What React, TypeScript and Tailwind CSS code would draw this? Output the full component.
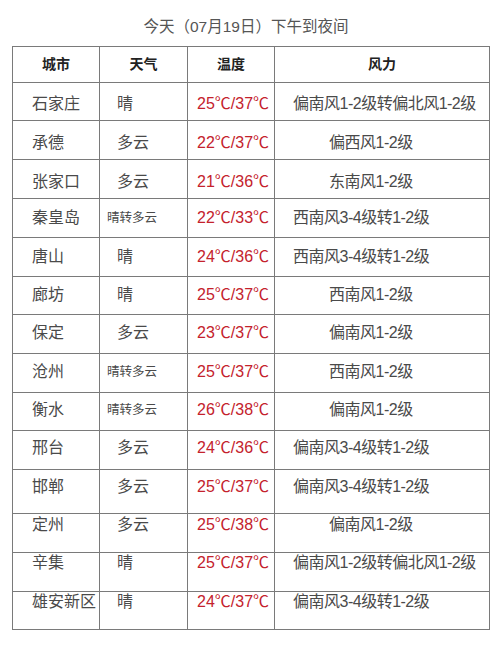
import React from 'react';

type Row = {
  city: string;
  weather: string;
  temp: string;
  wind: string;
  h: string;
  pt: string;
};

// h = row height incl. bottom border, pt = text offset from the row top
const rows: Row[] = [
  { city: '石家庄', weather: '晴', temp: '25℃/37℃', wind: '偏南风1-2级转偏北风1-2级', h: 'h-[38px]', pt: 'pt-[11px]' },
  { city: '承德', weather: '多云', temp: '22℃/37℃', wind: '偏西风1-2级', h: 'h-[39px]', pt: 'pt-[12px]' },
  { city: '张家口', weather: '多云', temp: '21℃/36℃', wind: '东南风1-2级', h: 'h-[39px]', pt: 'pt-[12px]' },
  { city: '秦皇岛', weather: '晴转多云', temp: '22℃/33℃', wind: '西南风3-4级转1-2级', h: 'h-[39px]', pt: 'pt-[9px]' },
  { city: '唐山', weather: '晴', temp: '24℃/36℃', wind: '西南风3-4级转1-2级', h: 'h-[39px]', pt: 'pt-[9px]' },
  { city: '廊坊', weather: '晴', temp: '25℃/37℃', wind: '西南风1-2级', h: 'h-[38px]', pt: 'pt-[8px]' },
  { city: '保定', weather: '多云', temp: '23℃/37℃', wind: '偏南风1-2级', h: 'h-[39px]', pt: 'pt-[8px]' },
  { city: '沧州', weather: '晴转多云', temp: '25℃/37℃', wind: '西南风1-2级', h: 'h-[39px]', pt: 'pt-[8px]' },
  { city: '衡水', weather: '晴转多云', temp: '26℃/38℃', wind: '偏南风1-2级', h: 'h-[38px]', pt: 'pt-[7px]' },
  { city: '邢台', weather: '多云', temp: '24℃/36℃', wind: '偏南风3-4级转1-2级', h: 'h-[39px]', pt: 'pt-[7px]' },
  { city: '邯郸', weather: '多云', temp: '25℃/37℃', wind: '偏南风3-4级转1-2级', h: 'h-[44px]', pt: 'pt-[7px]' },
  { city: '定州', weather: '多云', temp: '25℃/38℃', wind: '偏南风1-2级', h: 'h-[39px]', pt: 'pt-[1px]' },
  { city: '辛集', weather: '晴', temp: '25℃/37℃', wind: '偏南风1-2级转偏北风1-2级', h: 'h-[39px]', pt: 'pt-0' },
  { city: '雄安新区', weather: '晴', temp: '24℃/37℃', wind: '偏南风3-4级转1-2级', h: 'h-[38px]', pt: 'pt-0' },
];

const cols = 'grid grid-cols-[87px_88px_87px_215px]';
const cell = 'border-r border-b border-[#7a7a7a]';

export default function App() {
  return (
    <div className="w-[500px] h-[646px] bg-white text-[#4a4a4a] font-['Liberation_Sans','Noto_Sans_CJK_SC',sans-serif]">
      {/* Title */}
      <div className="h-[46px] pt-[17px] pr-[8px] text-center text-[15.5px] leading-[20px] text-[#555]">
        今天（07月19日）下午到夜间
      </div>

      <div className="ml-[12px] w-[478px] border-l border-t border-[#7a7a7a]">
        {/* Header */}
        <div className={`${cols} h-[36px] text-[14px] font-bold text-[#222]`}>
          {['城市', '天气', '温度', '风力'].map((t) => (
            <div key={t} className={`${cell} flex items-center justify-center`}>
              {t}
            </div>
          ))}
        </div>

        {/* Rows */}
        {rows.map((r) => {
          const longWind = r.wind.includes('转');
          const mixed = r.weather.length > 2;
          return (
            <div key={r.city} className={`${cols} ${r.h} text-[16px] leading-[20px]`}>
              <div className={`${cell} ${r.pt} pl-[19px] whitespace-nowrap`}>{r.city}</div>
              <div className={`${cell} ${r.pt} whitespace-nowrap ${mixed ? 'pl-[7px] text-[12.5px]' : 'pl-[17px]'}`}>
                {r.weather}
              </div>
              <div className={`${cell} ${r.pt} pl-[9px] text-[#c4222c] whitespace-nowrap`}>{r.temp}</div>
              <div className={`${cell} ${r.pt} whitespace-nowrap tracking-[-0.5px] ${longWind ? 'pl-[18px]' : 'pl-[54px]'}`}>
                {r.wind}
              </div>
            </div>
          );
        })}
      </div>
    </div>
  );
}
